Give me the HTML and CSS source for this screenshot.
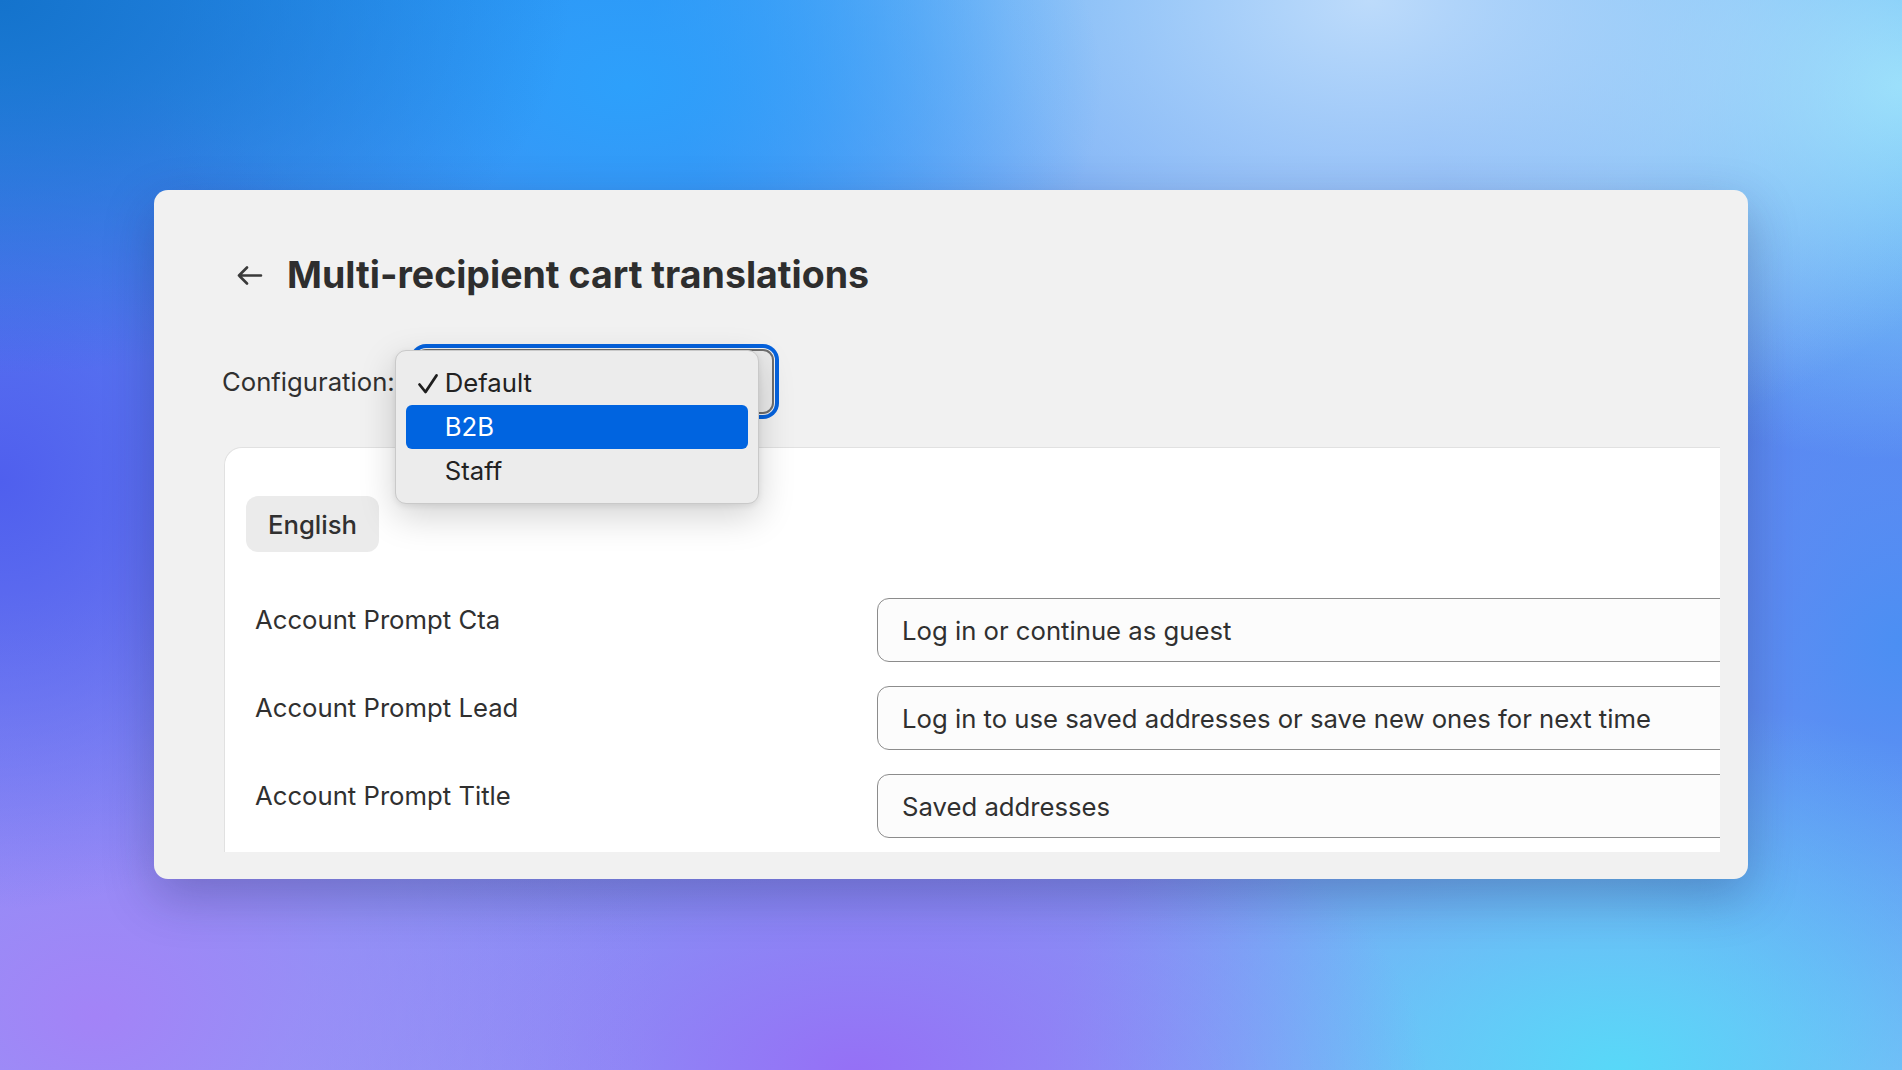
FILE: index.html
```html
<!DOCTYPE html>
<html>

<head>
    <meta charset="utf-8">
    <title>Multi-recipient cart translations</title>
    <link rel="stylesheet" href="styles.css">
</head>

<body>

    <div class="window">
        <div class="viewport">

            <div class="header">
                <svg class="back" width="28" height="20" viewBox="0 0 28 20">
                    <path d="M25 9.5H3M11 1.5L3 9.5L11 17.5" fill="none" stroke="#3a3a3a" stroke-width="2.6" stroke-linecap="round" stroke-linejoin="round" />
                </svg>
                <h1>Multi-recipient cart translations</h1>
            </div>

            <div class="config">
                <span class="config-label">Configuration:</span>
                <div class="select-wrap">
                    <div class="select"></div>
                    <!-- open dropdown -->
                    <ul class="menu">
                        <li class="option">
                            <svg class="check" width="22" height="22" viewBox="0 0 22 22">
                                <path d="M2.5 11.5L8.5 19L19.5 2.5" fill="none" stroke="#1e1e1e" stroke-width="2.8" stroke-linecap="round" stroke-linejoin="round" />
                            </svg>
                            Default
                        </li>
                        <li class="option active">B2B</li>
                        <li class="option">Staff</li>
                    </ul>
                </div>
            </div>

            <div class="panel">
                <div class="tabs">
                    <span class="tab">English</span>
                </div>
                <div class="fields">
                    <div class="field-label">Account Prompt Cta</div>
                    <div class="field-input">Log in or continue as guest</div>

                    <div class="field-label">Account Prompt Lead</div>
                    <div class="field-input">Log in to use saved addresses or save new ones for next time</div>

                    <div class="field-label">Account Prompt Title</div>
                    <div class="field-input">Saved addresses</div>
                </div>
            </div>

        </div>
    </div>

</body>

</html>
```

FILE: styles.css
```css
html,
body {
    margin: 0;
    padding: 0;
    height: 100%;
    overflow: hidden;
}

body {
    font-family: Inter, "Noto Sans", sans-serif;
    color: #303030;
    background-color: #7d8ff4;
    background-image:
        radial-gradient(ellipse 30% 35% at 0% 0%, #1473cc 0%, rgba(20, 115, 204, 0) 100%),
        radial-gradient(ellipse 25% 30% at 33% 8%, #2da0fb 0%, rgba(45, 160, 251, 0) 100%),
        radial-gradient(ellipse 38% 45% at 72% 0%, #bddbfb 0%, rgba(189, 219, 251, 0.6) 50%, rgba(189, 219, 251, 0) 100%),
        radial-gradient(ellipse 25% 35% at 100% 8%, #8ee2fb 0%, rgba(142, 226, 251, 0) 100%),
        radial-gradient(ellipse 22% 40% at 0% 45%, #4f5fee 0%, rgba(79, 95, 238, 0) 100%),
        radial-gradient(ellipse 30% 40% at 5% 95%, #a383f7 0%, rgba(163, 131, 247, 0) 100%),
        radial-gradient(ellipse 30% 30% at 45% 100%, #9570f6 0%, rgba(149, 112, 246, 0) 100%),
        radial-gradient(ellipse 30% 35% at 85% 100%, #58d8f8 0%, rgba(88, 216, 248, 0) 100%),
        radial-gradient(ellipse 20% 40% at 100% 60%, #4b8ff3 0%, rgba(75, 143, 243, 0) 100%),
        linear-gradient(180deg, #2e8ef0 0%, #7a84f2 55%, #86a6f6 100%);
}

.window {
    width: 1594px;
    height: 689px;
    margin: 190px 0 0 154px;
    box-sizing: border-box;
    padding: 0 28px 27px 0;
    background: #f1f1f1;
    border-radius: 14px;
    box-shadow: 0 18px 50px rgba(20, 30, 80, 0.28);
}

.viewport {
    height: 100%;
    box-sizing: border-box;
    padding: 63px 0 0 70px;
    overflow: hidden;
}

.header {
    display: flex;
    align-items: center;
    gap: 23px;
    padding-left: 12px;
    height: 44px;
}

.back {
    display: block;
    margin-top: 2px;
}

h1 {
    margin: 0;
    font-size: 37.5px;
    line-height: 44px;
    font-weight: 700;
    letter-spacing: 0;
    color: #2e2e2e;
}

.config {
    display: flex;
    align-items: center;
    gap: 20px;
    margin-top: 52px;
    margin-left: -2px;
}

.config-label {
    font-size: 25.7px;
    color: #303030;
}

.select-wrap {
    position: relative;
}

.select {
    width: 359px;
    height: 65px;
    box-sizing: border-box;
    border: 2px solid #6e6e6e;
    border-radius: 11px;
    background: #eaeaea;
    box-shadow: 0 0 0 1px #f4f4f4, 0 0 0 5px #0562dd;
}

.menu {
    position: absolute;
    left: -20px;
    top: 1px;
    z-index: 5;
    width: 364px;
    box-sizing: border-box;
    margin: 0;
    padding: 10px;
    list-style: none;
    background: #ececec;
    border: 1px solid #c9c9c9;
    border-radius: 11px;
    box-shadow: 0 12px 36px rgba(0, 0, 0, 0.18), 0 2px 6px rgba(0, 0, 0, 0.08);
}

.option {
    position: relative;
    height: 44px;
    line-height: 44px;
    padding-left: 39px;
    font-size: 25.7px;
    color: #222;
    border-radius: 6px;
}

.option.active {
    background: #0064e0;
    color: #fff;
}

.check {
    position: absolute;
    left: 11px;
    top: 12px;
}

.panel {
    margin-top: 33px;
    margin-right: -300px;
    padding: 48px 0 60px 21px;
    background: #fff;
    border-top: 1px solid #e1e1e1;
    border-left: 1px solid #e1e1e1;
    border-radius: 18px 0 0 0;
}

.tabs {
    display: flex;
}

.tab {
    display: inline-flex;
    align-items: center;
    justify-content: center;
    width: 133px;
    height: 56px;
    border-radius: 12px;
    background: #ebebeb;
    font-size: 25.7px;
    font-weight: 500;
    color: #303030;
}

.fields {
    display: grid;
    grid-template-columns: 622px 1fr;
    row-gap: 24px;
    margin-top: 46px;
    padding-left: 9px;
}

.field-label {
    padding-top: 6px;
    font-size: 25.7px;
    line-height: 32px;
    color: #303030;
}

.field-input {
    height: 64px;
    box-sizing: border-box;
    padding: 0 24px;
    display: flex;
    align-items: center;
    border: 1.5px solid #8c8c8c;
    border-radius: 12px;
    background: #fcfcfc;
    font-size: 25.7px;
    color: #303030;
}
```
